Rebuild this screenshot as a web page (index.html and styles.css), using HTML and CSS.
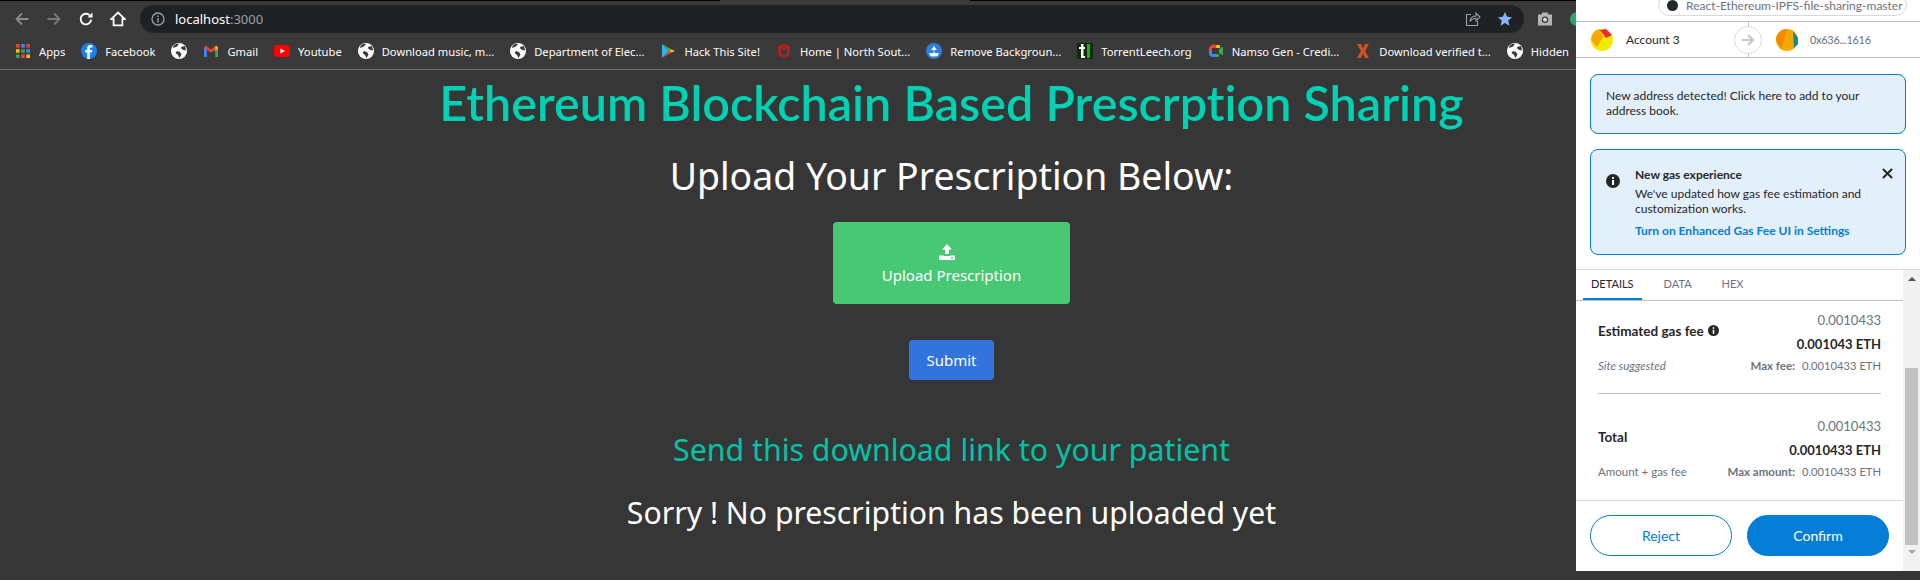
FILE: index.html
```html
<!DOCTYPE html>
<html lang="en">
<head>
  <meta charset="UTF-8" />
  <title>Prescription Sharing</title>
  <link rel="stylesheet" href="styles.css">
</head>
<body>
  <div class="browser">
    <div class="toolbar">
      <div class="navBtns">
        <svg class="navIcon" viewBox="0 0 16 16"><path d="M14.5 8H2.5M8 2.5L2.5 8L8 13.5" fill="none" stroke="#8a8c8e" stroke-width="1.8"/></svg>
        <svg class="navIcon" viewBox="0 0 16 16"><path d="M1.5 8H13.5M8 2.5L13.5 8L8 13.5" fill="none" stroke="#77797b" stroke-width="1.8"/></svg>
        <svg class="navIcon" viewBox="0 0 16 16"><path d="M13.2 8.6A5.3 5.3 0 1 1 11.6 4.2" fill="none" stroke="#fff" stroke-width="1.9"/><path d="M9.6 6.4H14.5V1.5Z" fill="#fff"/></svg>
        <svg class="navIcon" viewBox="0 0 16 16"><path d="M8 1.6L1.2 8.2H3.6V14.4H12.4V8.2H14.8Z" fill="none" stroke="#fff" stroke-width="1.8"/></svg>
      </div>
      <div class="omnibox">
        <svg class="infoIcon" viewBox="0 0 14 14"><circle cx="7" cy="7" r="6" fill="none" stroke="#9aa0a6" stroke-width="1.3"/><path d="M7 6V10.5M7 3.4V5" stroke="#9aa0a6" stroke-width="1.4"/></svg>
        <span class="url">localhost<span class="urlPort">:3000</span></span>
        <span class="omniSpacer"></span>
        <svg class="shareIcon" viewBox="0 0 16 16"><path d="M6 3.5H1.5V14.5H12.5V10M5 10.5C5.5 7 8 5 11 5V2L15 6L11 10V7.2C8.5 7.2 6.5 8.3 5 10.5Z" fill="none" stroke="#9aa0a6" stroke-width="1.1"/></svg>
        <svg class="starIcon" viewBox="0 0 16 16"><path d="M8 1L10.1 5.7L15 6.2L11.3 9.6L12.4 14.8L8 12.1L3.6 14.8L4.7 9.6L1 6.2L5.9 5.7Z" fill="#8ab4f8"/></svg>
      </div>
      <svg class="cameraIcon" viewBox="0 0 16 16"><path d="M1 3.5H4.5L5.5 1.5H10.5L11.5 3.5H15V14.5H1Z" fill="#b5b5b5"/><circle cx="8" cy="8.8" r="3.2" fill="#3a3a3a"/><circle cx="8" cy="8.8" r="2" fill="#dcdcdc"/></svg>
      <span class="extDot"></span>
    </div>
    <div class="bookmarks">
      <div class="bookmark">
        <svg class="bmIcon" viewBox="0 0 16 16"><rect x="1" y="1" width="3.6" height="3.6" fill="#ea4335"/><rect x="6.2" y="1" width="3.6" height="3.6" fill="#4285f4"/><rect x="11.4" y="1" width="3.6" height="3.6" fill="#ea4335"/><rect x="1" y="6.2" width="3.6" height="3.6" fill="#fbbc05"/><rect x="6.2" y="6.2" width="3.6" height="3.6" fill="#34a853"/><rect x="11.4" y="6.2" width="3.6" height="3.6" fill="#4285f4"/><rect x="1" y="11.4" width="3.6" height="3.6" fill="#34a853"/><rect x="6.2" y="11.4" width="3.6" height="3.6" fill="#ea4335"/><rect x="11.4" y="11.4" width="3.6" height="3.6" fill="#fbbc05"/></svg>
        Apps
      </div>
      <div class="bookmark">
        <svg class="bmIcon" viewBox="0 0 16 16"><circle cx="8" cy="8" r="8" fill="#1a82ee"/><path d="M8.8 16V9.5H11L11.3 7H8.8V5.6C8.8 4.8 9.1 4.4 10 4.4H11.4V2.2C10.9 2.1 10.3 2 9.6 2C7.5 2 6.2 3.2 6.2 5.3V7H4.2V9.5H6.2V16Z" fill="#fff"/></svg>
        Facebook
      </div>
      <div class="bookmark">
        <svg class="bmIcon" viewBox="0 0 16 16"><use href="#globe"/></svg>
      </div>
      <div class="bookmark">
        <svg class="bmIcon" viewBox="0 0 16 16"><path d="M1 14V4L3.8 6V14Z" fill="#4285f4"/><path d="M15 14V4L12.2 6V14Z" fill="#34a853"/><path d="M1 4.5L3 2.5L8 6.5L13 2.5L15 4.5L8 9.8Z" fill="#ea4335"/><path d="M13 2.5L15 4.5V6L12.2 8V4Z" fill="#fbbc05"/></svg>
        Gmail
      </div>
      <div class="bookmark">
        <svg class="bmIcon" viewBox="0 0 16 16"><rect x="0" y="2" width="16" height="12" rx="3" fill="#f00"/><path d="M6.4 5.4L11 8L6.4 10.6Z" fill="#fff"/></svg>
        Youtube
      </div>
      <div class="bookmark">
        <svg class="bmIcon" viewBox="0 0 16 16"><use href="#globe"/></svg>
        Download music, m...
      </div>
      <div class="bookmark">
        <svg class="bmIcon" viewBox="0 0 16 16"><use href="#globe"/></svg>
        Department of Elec...
      </div>
      <div class="bookmark">
        <svg class="bmIcon" viewBox="0 0 16 16"><path d="M2 1L9 8L2 15Z" fill="#29b6f6"/><path d="M2 1L11.5 6.4L9 8Z" fill="#4caf50"/><path d="M2 15L11.5 9.6L9 8Z" fill="#f44336"/><path d="M11.5 6.4L15 8L11.5 9.6L9 8Z" fill="#ffc107"/></svg>
        Hack This Site!
      </div>
      <div class="bookmark">
        <svg class="bmIcon" viewBox="0 0 16 16"><path d="M2 3L8 0.5L14 3V12L8 15.5L2 12Z" fill="#a92222"/><path d="M5 5V10.5L8 12.5L11 10.5V5L8 7.5Z" fill="#3a3a3a"/></svg>
        Home | North Sout...
      </div>
      <div class="bookmark">
        <svg class="bmIcon" viewBox="0 0 16 16"><circle cx="8" cy="8" r="8" fill="#2e7fdc"/><path d="M8 3V10M5.5 7L8 4L10.5 7M3.5 10.5H12.5L11 13H5Z" fill="#fff" stroke="#fff" stroke-width=".8"/></svg>
        Remove Backgroun...
      </div>
      <div class="bookmark">
        <svg class="bmIcon" viewBox="0 0 16 16"><rect width="16" height="16" fill="#12290f"/><path d="M4 1V4H2V6H4V15H8V13H6.5V6H8V4H6.5V1Z" fill="#fff"/><path d="M10 1H13V15H10Z" fill="#17b312"/></svg>
        TorrentLeech.org
      </div>
      <div class="bookmark">
        <svg class="bmIcon" viewBox="0 0 16 16"><path d="M1 8A5 5 0 0 1 8 2V5H4V8Z" fill="#ea4335"/><path d="M8 2H12V5H8Z" fill="#fbbc05"/><path d="M1 8H4V11H8V14H5A4 4 0 0 1 1 10Z" fill="#4285f4"/><path d="M8 11H11V14H8Z" fill="#34a853"/><path d="M11 6L15 3.5V12.5L11 10Z" fill="#34a853"/></svg>
        Namso Gen - Credi...
      </div>
      <div class="bookmark">
        <svg class="bmIcon" viewBox="0 0 16 16"><path d="M2 1H6L8 5.5L10 1H14L10 8L14 15H10L8 10.5L6 15H2L6 8Z" fill="#d8501f"/></svg>
        Download verified t...
      </div>
      <div class="bookmark">
        <svg class="bmIcon" viewBox="0 0 16 16"><use href="#globe"/></svg>
        Hidden
      </div>
    </div>

    <div class="page">
      <h1 class="title">Ethereum Blockchain Based Prescrption Sharing</h1>
      <h2 class="subtitle">Upload Your Prescription Below:</h2>
      <div class="uploadBtn">
        <svg class="uploadIcon" viewBox="0 0 16 16"><path d="M8 0L13 5.5H10V10H6V5.5H3Z" fill="#fff"/><path d="M0 11.5H5V12H11V11.5H16V16H0Z" fill="#fff"/><circle cx="13" cy="14" r="1" fill="#48c774"/></svg>
        <span>Upload Prescription</span>
      </div>
      <div class="submitBtn">Submit</div>
      <p class="sendLink">Send this download link to your patient</p>
      <p class="sorry">Sorry ! No prescription has been uploaded yet</p>
    </div>
  </div>

  <svg class="defs" width="0" height="0">
    <symbol id="globe" viewBox="0 0 16 16">
      <circle cx="8" cy="8" r="8" fill="#fff"/>
      <path d="M2 5L6 3.5L8 1L5.5 0.8L2.5 2.8ZM6 8L9 9L10.5 11.5L8.5 15L7 12L4.5 10ZM10 4L14 3L15 7.5L12.5 7L10.5 6Z" fill="#3a3a3a"/>
    </symbol>
  </svg>

  <!-- MetaMask popup over the browser window -->
  <div class="popup">
    <div class="originRow">
      <div class="originPill"><span class="originDot"></span>React-Ethereum-IPFS-file-sharing-master</div>
    </div>
    <div class="accountRow">
      <div class="acct">
        <svg class="jazz" viewBox="0 0 22 22"><circle cx="11" cy="11" r="11" fill="#f0ea00"/><path d="M0 11A11 11 0 0 1 9 0L12 8L6 18Z" fill="#f5a800"/><path d="M9 1L15 0L21 6L15 9Z" fill="#ee2a2a"/></svg>
        <span>Account 3</span>
      </div>
      <div class="acctArrow">
        <svg viewBox="0 0 16 16"><path d="M1.5 8H13M8 3L13 8L8 13" fill="none" stroke="#c4c7cb" stroke-width="2.2"/></svg>
      </div>
      <div class="acct acctTo">
        <svg class="jazz" viewBox="0 0 22 22"><circle cx="11" cy="11" r="11" fill="#f5a800"/><path d="M0 11A11 11 0 0 1 11 0L8 10L6 20Z" fill="#f58a00"/><path d="M17 2L22 9V15L18 19Z" fill="#128a8a"/></svg>
        <span>0x636...1616</span>
      </div>
    </div>

    <div class="noteBox addressNote">New address detected! Click here to add to your address book.</div>

    <div class="noteBox gasNote">
      <svg class="gasIcon" viewBox="0 0 14 14"><circle cx="7" cy="7" r="7" fill="#24272a"/><path d="M7 6V11M7 3V4.8" stroke="#fff" stroke-width="2"/></svg>
      <div class="gasText">
        <div class="gasTitle">New gas experience</div>
        <div>We've updated how gas fee estimation and customization works.</div>
        <div class="gasLink">Turn on Enhanced Gas Fee UI in Settings</div>
      </div>
      <svg class="closeIcon" viewBox="0 0 12 12"><path d="M1 1L11 11M11 1L1 11" stroke="#24272a" stroke-width="2.2"/></svg>
    </div>

    <div class="scrollArea">
      <div class="scrollContent">
        <div class="tabs">
          <div class="tab tabActive">DETAILS</div>
          <div class="tab">DATA</div>
          <div class="tab">HEX</div>
        </div>
        <div class="fees">
          <div class="feeRow">
            <div class="feeLabel">Estimated gas fee <svg class="feeInfo" viewBox="0 0 14 14"><circle cx="7" cy="7" r="7" fill="#24272a"/><path d="M7 6V11M7 3V4.8" stroke="#fff" stroke-width="2"/></svg></div>
            <div class="feeValues">
              <div class="feeGray">0.0010433</div>
              <div class="feeBold">0.001043 ETH</div>
            </div>
          </div>
          <div class="feeSub">
            <i>Site suggested</i>
            <span><b>Max fee:</b> <span class="subAmount">0.0010433 ETH</span></span>
          </div>
          <div class="feeDivider"></div>
          <div class="feeRow">
            <div class="feeLabel">Total</div>
            <div class="feeValues">
              <div class="feeGray">0.0010433</div>
              <div class="feeBold">0.0010433 ETH</div>
            </div>
          </div>
          <div class="feeSub">
            <span>Amount + gas fee</span>
            <span><b>Max amount:</b> <span class="subAmount">0.0010433 ETH</span></span>
          </div>
        </div>
        <div class="footer">
          <div class="pillBtn rejectBtn">Reject</div>
          <div class="pillBtn confirmBtn">Confirm</div>
        </div>
      </div>
      <div class="scrollbar">
        <span class="arrowUp"></span>
        <span class="thumb"></span>
        <span class="arrowDown"></span>
      </div>
    </div>
  </div>
</body>
</html>
```

FILE: styles.css
```css
html, body {
  margin: 0;
  padding: 0;
  height: 588px;
  overflow: hidden;
  background: #fff;
}
body {
  font-family: "Noto Sans", "Open Sans", sans-serif;
}
.browser {
  height: 580px;
  display: flex;
  flex-direction: column;
  background: #363636;
}
.defs {
  display: none;
}

/* chrome toolbar */
.toolbar {
  height: 28px;
  padding: 5px 0 0 14px;
  display: flex;
  align-items: center;
  background: linear-gradient(to right, #000 720px, transparent 720px, transparent 970px, #000 970px) 0 0 / 100% 1px no-repeat, #3a3a3a;
}
.navBtns {
  display: flex;
  gap: 16px;
  width: 126px;
}
.navIcon {
  width: 16px;
  height: 16px;
}
.omnibox {
  width: 1384px;
  height: 28px;
  box-sizing: border-box;
  padding: 0 11px;
  display: flex;
  align-items: center;
  background: #202124;
  border-radius: 14px;
}
.infoIcon {
  width: 14px;
  height: 14px;
  margin-right: 10px;
}
.url {
  color: #fff;
  font-size: 13px;
}
.urlPort {
  color: #9aa0a6;
}
.omniSpacer {
  flex: 1;
}
.shareIcon {
  width: 16px;
  height: 16px;
  margin-right: 16px;
}
.starIcon {
  width: 16px;
  height: 16px;
}
.cameraIcon {
  width: 16px;
  height: 16px;
  margin-left: 13px;
  flex-shrink: 0;
}
.extDot {
  width: 14px;
  height: 14px;
  margin-left: 17px;
  border-radius: 50%;
  background: #2fa36b;
  flex-shrink: 0;
}

/* bookmarks */
.bookmarks {
  height: 36px;
  padding-left: 15px;
  display: flex;
  align-items: center;
  gap: 16px;
  background: #3a3a3a;
  border-bottom: 1px solid #6e6e6e;
  color: #fff;
  font-size: 11.2px;
  white-space: nowrap;
  overflow: hidden;
}
.bookmark {
  display: flex;
  align-items: center;
  gap: 8px;
  flex-shrink: 0;
}
.bmIcon {
  width: 16px;
  height: 16px;
  flex-shrink: 0;
}

/* page */
.page {
  flex: 1;
  padding-right: 17px;
  display: flex;
  flex-direction: column;
  align-items: center;
  color: #fff;
}
.title {
  margin: 0;
  font-family: "Lato", "Noto Sans", sans-serif;
  font-size: 48.5px;
  line-height: 64px;
  font-weight: 600;
  font-variant-ligatures: none;
  color: #00d1b2;
}
.subtitle {
  margin: 17px 0 0 0;
  font-size: 37.4px;
  line-height: 50px;
  font-weight: 400;
}
.uploadBtn {
  width: 237px;
  height: 82px;
  margin-top: 21px;
  display: flex;
  flex-direction: column;
  align-items: center;
  justify-content: center;
  gap: 5px;
  padding: 2px 0 0 0;
  box-sizing: border-box;
  background: #48c774;
  border-radius: 4px;
  font-size: 15px;
}
.uploadIcon {
  width: 16px;
  height: 16px;
  margin-right: 10px;
}
.submitBtn {
  width: 85px;
  height: 40px;
  margin-top: 36px;
  display: flex;
  align-items: center;
  justify-content: center;
  background: #3273dc;
  border-radius: 4px;
  font-size: 15px;
}
.sendLink {
  margin: 48px 0 0 0;
  font-size: 30.3px;
  line-height: 44px;
  color: #00c4a7;
}
.sorry {
  margin: 19px 0 0 0;
  font-size: 30.2px;
  line-height: 44px;
}

/* metamask popup */
.popup {
  position: absolute;
  left: 1576px;
  top: 0;
  width: 344px;
  height: 571px;
  display: flex;
  flex-direction: column;
  background: #fff;
  color: #24272a;
  font-family: "Lato", "Open Sans", sans-serif;
  font-size: 12px;
}
.originRow {
  height: 21px;
  padding-left: 82px;
}
.originPill {
  width: 249px;
  height: 22px;
  margin-top: -6px;
  padding-left: 8px;
  box-sizing: border-box;
  display: flex;
  align-items: center;
  gap: 8px;
  border: 1px solid #d6d9dc;
  border-radius: 12px;
  color: #6a737d;
  white-space: nowrap;
}
.originDot {
  width: 11px;
  height: 11px;
  border-radius: 50%;
  background: #24272a;
  flex-shrink: 0;
}
.accountRow {
  height: 35px;
  padding: 0 15px;
  display: flex;
  align-items: center;
  border-top: 1px solid #bbc0c5;
  border-bottom: 1px solid #bbc0c5;
  background: linear-gradient(#bbc0c5, #bbc0c5) 172px 0 / 1px 100% no-repeat;
}
.acct {
  width: 143px;
  flex-shrink: 0;
  display: flex;
  align-items: center;
  gap: 13px;
}
.acctTo {
  width: 120px;
  margin-left: 14px;
  gap: 12px;
  color: #6a737d;
  font-size: 11px;
  letter-spacing: -0.3px;
}
.jazz {
  width: 22px;
  height: 22px;
  flex-shrink: 0;
}
.acctArrow {
  width: 28px;
  height: 28px;
  flex-shrink: 0;
  box-sizing: border-box;
  display: flex;
  align-items: center;
  justify-content: center;
  background: #fff;
  border: 1px solid #d6d9dc;
  border-radius: 50%;
}
.acctArrow svg {
  width: 16px;
  height: 16px;
}
.noteBox {
  width: 316px;
  margin-left: 14px;
  box-sizing: border-box;
  background: #e3f0fb;
  border: 1px solid #037dd6;
  border-radius: 8px;
}
.addressNote {
  height: 60px;
  margin-top: 16px;
  padding: 13px 15px;
  line-height: 15px;
}
.gasNote {
  height: 106px;
  margin-top: 15px;
  padding: 17px 12px 0 15px;
  display: flex;
  line-height: 15px;
}
.gasIcon {
  width: 14px;
  height: 14px;
  margin-top: 7px;
  flex-shrink: 0;
}
.gasText {
  width: 232px;
  margin-left: 15px;
}
.gasTitle {
  font-weight: 700;
  margin-bottom: 4px;
}
.gasLink {
  margin-top: 7px;
  font-weight: 700;
  color: #037dd6;
}
.closeIcon {
  width: 11px;
  height: 11px;
  margin-left: 15px;
  margin-top: 1px;
}
.scrollArea {
  flex: 1;
  margin-top: 14px;
  display: flex;
  border-top: 1px solid #d6d9dc;
  min-height: 0;
}
.scrollContent {
  flex: 1;
  display: flex;
  flex-direction: column;
}
.tabs {
  height: 30px;
  padding-left: 7px;
  display: flex;
  gap: 14px;
  border-bottom: 1px solid #bbc0c5;
}
.tab {
  padding: 0 8px;
  line-height: 27px;
  font-size: 11px;
  color: #6a737d;
}
.tabActive {
  color: #24272a;
  height: 30px;
  box-sizing: border-box;
  border-bottom: 2px solid #037dd6;
}
.fees {
  flex: 1;
  padding: 10px 22px 0 22px;
}
.feeRow {
  display: flex;
  justify-content: space-between;
  align-items: center;
}
.feeLabel {
  padding-bottom: 3px;
  font-size: 13.5px;
  font-weight: 700;
  display: flex;
  align-items: center;
  gap: 4px;
}
.feeInfo {
  width: 11px;
  height: 11px;
}
.feeValues {
  text-align: right;
}
.feeGray {
  font-size: 13px;
  line-height: 18px;
  color: #6a737d;
}
.feeBold {
  margin-top: 6px;
  font-size: 13px;
  line-height: 18px;
  font-weight: 700;
}
.feeSub {
  margin-top: 4px;
  display: flex;
  justify-content: space-between;
  color: #6a737d;
  font-size: 11.5px;
  line-height: 18px;
}
.feeSub b {
  margin-right: 4px;
}
.subAmount {
  font-size: 11.2px;
}
.feeDivider {
  height: 1px;
  margin: 18px 0 23px 0;
  background: #bbc0c5;
}
.footer {
  height: 71px;
  padding-left: 14px;
  box-sizing: border-box;
  display: flex;
  gap: 15px;
  padding-top: 14px;
  border-top: 1px solid #d6d9dc;
}
.pillBtn {
  width: 142px;
  height: 41px;
  box-sizing: border-box;
  display: flex;
  align-items: center;
  justify-content: center;
  border: 1px solid #037dd6;
  border-radius: 21px;
  font-size: 14px;
}
.rejectBtn {
  color: #037dd6;
}
.confirmBtn {
  background: #037dd6;
  color: #fff;
}
.scrollbar {
  width: 17px;
  display: flex;
  flex-direction: column;
  align-items: center;
  background: #f1f1f1;
}
.arrowUp {
  margin-top: 7px;
  border: 4px solid transparent;
  border-top: 0;
  border-bottom: 4px solid #505050;
}
.thumb {
  width: 13px;
  height: 177px;
  margin-top: 87px;
  background: #c1c1c1;
}
.arrowDown {
  margin-top: 5px;
  border: 4px solid transparent;
  border-bottom: 0;
  border-top: 4px solid #a3a3a3;
}
```
